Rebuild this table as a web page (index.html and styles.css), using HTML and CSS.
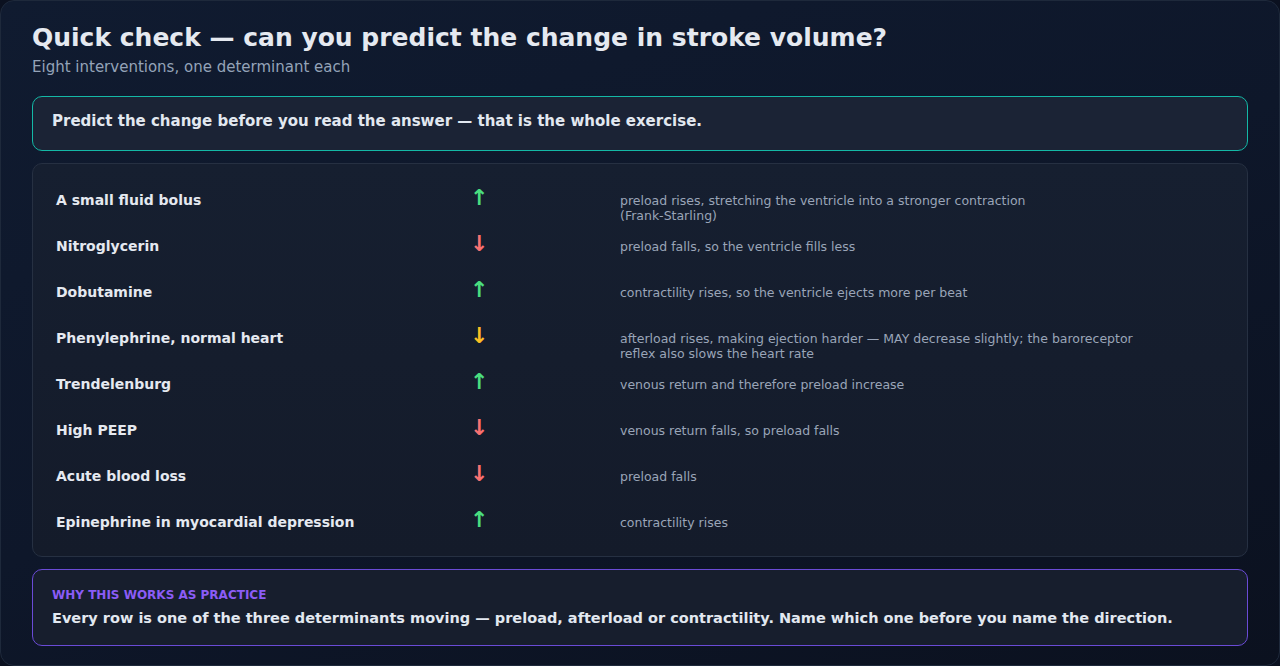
FILE: index.html
```html
<!DOCTYPE html>
<html lang="en">
<head>
<meta charset="utf-8">
<title>Quick check</title>
<link rel="stylesheet" href="styles.css">
</head>
<body>
<main class="frame">
  <h1 class="title">Quick check — can you predict the change in stroke volume?</h1>
  <p class="subtitle">Eight interventions, one determinant each</p>

  <div class="callout">Predict the change before you read the answer — that is the whole exercise.</div>

  <section class="table">
    <div class="row">
      <div class="name">A small fluid bolus</div>
      <div class="arrow up">↑</div>
      <div class="desc">preload rises, stretching the ventricle into a stronger contraction<br>(Frank-Starling)</div>
    </div>
    <div class="row">
      <div class="name">Nitroglycerin</div>
      <div class="arrow down">↓</div>
      <div class="desc">preload falls, so the ventricle fills less</div>
    </div>
    <div class="row">
      <div class="name">Dobutamine</div>
      <div class="arrow up">↑</div>
      <div class="desc">contractility rises, so the ventricle ejects more per beat</div>
    </div>
    <div class="row">
      <div class="name">Phenylephrine, normal heart</div>
      <div class="arrow maybe">↓</div>
      <div class="desc">afterload rises, making ejection harder — MAY decrease slightly; the baroreceptor<br>reflex also slows the heart rate</div>
    </div>
    <div class="row">
      <div class="name">Trendelenburg</div>
      <div class="arrow up">↑</div>
      <div class="desc">venous return and therefore preload increase</div>
    </div>
    <div class="row">
      <div class="name">High PEEP</div>
      <div class="arrow down">↓</div>
      <div class="desc">venous return falls, so preload falls</div>
    </div>
    <div class="row">
      <div class="name">Acute blood loss</div>
      <div class="arrow down">↓</div>
      <div class="desc">preload falls</div>
    </div>
    <div class="row">
      <div class="name">Epinephrine in myocardial depression</div>
      <div class="arrow up">↑</div>
      <div class="desc">contractility rises</div>
    </div>
  </section>

  <aside class="note">
    <div class="note-label">WHY THIS WORKS AS PRACTICE</div>
    <p class="note-body">Every row is one of the three determinants moving — preload, afterload or contractility. Name which one before you name the direction.</p>
  </aside>
</main>
</body>
</html>
```

FILE: styles.css
```css
* { box-sizing: border-box; }
html, body {
  margin: 0;
  padding: 0;
  background: #0b1120;
}
body {
  font-family: "DejaVu Sans", "Liberation Sans", sans-serif;
  color: #e2e8f0;
}
.frame {
  width: 1280px;
  height: 666px;
  border: 1px solid #1e293b;
  border-radius: 14px;
  background: linear-gradient(160deg, #101b30 0%, #0e172a 50%, #0b111f 100%);
  padding: 22px 31px 19px;
  display: flex;
  flex-direction: column;
  overflow: hidden;
}
.title {
  margin: 0;
  font-size: 25px;
  line-height: 30px;
  font-weight: 700;
  color: #e5e9f0;
}
.subtitle {
  margin: 3px 0 0;
  font-size: 15px;
  line-height: 22px;
  color: #94a3b8;
}
.callout {
  margin-top: 18px;
  height: 55px;
  border: 1px solid #14b8a6;
  border-radius: 10px;
  background: #1b2335;
  padding: 13px 19px;
  font-size: 15px;
  line-height: 22px;
  font-weight: 700;
  color: #e2e8f0;
}
.table {
  margin-top: 12px;
  height: 394px;
  border: 1px solid #263042;
  border-radius: 10px;
  background: linear-gradient(180deg, #161f30 0%, #141b2a 100%);
  padding: 12px 23px;
  display: flex;
  flex-direction: column;
}
.row {
  height: 46px;
  flex: none;
  display: flex;
  align-items: flex-start;
  padding-top: 14px;
}
.name {
  width: 417px;
  flex: none;
  font-size: 14px;
  line-height: 20px;
  font-weight: 700;
  color: #e5e9f0;
}
.arrow {
  width: 150px;
  margin-left: -3px;
  flex: none;
  font-size: 22px;
  line-height: 20px;
  font-weight: 700;
  margin-top: -2px;
}
.arrow.up { color: #4ade80; }
.arrow.down { color: #f87171; }
.arrow.maybe { color: #fbbf24; }
.desc {
  flex: 1;
  margin-top: 3px;
  font-size: 12.5px;
  line-height: 15px;
  color: #9aa5b8;
}
.note {
  margin-top: 12px;
  height: 77px;
  border: 1px solid #6a4bd6;
  border-radius: 10px;
  background: #171e2d;
  padding: 17px 19px 15px;
}
.note-label {
  font-size: 12px;
  line-height: 16px;
  font-weight: 700;
  color: #8b5cf6;
}
.note-body {
  margin: 4px 0 0;
  font-size: 14.5px;
  line-height: 22px;
  font-weight: 700;
  color: #e2e8f0;
}
```
